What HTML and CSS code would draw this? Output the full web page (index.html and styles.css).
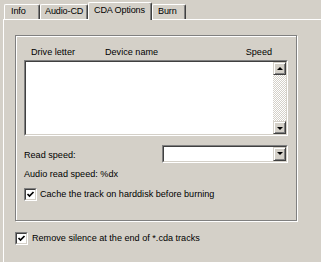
FILE: index.html
```html
<!DOCTYPE html>
<html lang="en">
    <head>
        <title>CDA Options</title>
        <link rel="stylesheet" href="styles.css">
    </head>
    <body>
        <div class="tabs">
            <div class="tab tab-info">Info</div>
            <div class="tab tab-audio">Audio-CD</div>
            <div class="tab tab-cda selected">CDA Options</div>
            <div class="tab tab-burn">Burn</div>
        </div>
        <div class="panel">
            <div class="group">
                <div class="drive-head">
                    <span>Drive letter</span>
                    <span>Device name</span>
                    <span>Speed</span>
                </div>
                <div class="sunken drive-list">
                    <div class="sunken-in list-inner">
                        <div class="scrollbar">
                            <div class="sb-btn"><span class="arrow-up"></span></div>
                            <div class="sb-track"></div>
                            <div class="sb-btn"><span class="arrow-down"></span></div>
                        </div>
                    </div>
                </div>
                <div class="speed-row">
                    <span>Read speed:</span>
                    <div class="sunken combo">
                        <div class="sunken-in combo-inner">
                            <div class="sb-btn"><span class="arrow-down"></span></div>
                        </div>
                    </div>
                </div>
                <div class="audio-speed">Audio read speed: %dx</div>
                <div class="check-row cache-row">
                    <span class="sunken check">
                        <span class="sunken-in check-inner">
                            <svg width="9" height="9" viewBox="0 0 9 9"><polyline points="1.5,4 3.5,6 7.5,2" fill="none" stroke="#000" stroke-width="1.7"/></svg>
                        </span>
                    </span>
                    <span>Cache the track on harddisk before burning</span>
                </div>
            </div>
            <div class="check-row silence-row">
                <span class="sunken check">
                    <span class="sunken-in check-inner">
                        <svg width="9" height="9" viewBox="0 0 9 9"><polyline points="1.5,4 3.5,6 7.5,2" fill="none" stroke="#000" stroke-width="1.7"/></svg>
                    </span>
                </span>
                <span>Remove silence at the end of *.cda tracks</span>
            </div>
        </div>
    </body>
</html>
```

FILE: styles.css
```css
body {
margin: 0;
width: 321px;
height: 262px;
overflow: hidden;
background-color: #d4d0c8;
font-family: "Liberation Sans", Arial, sans-serif;
font-size: 9.1px;
color: #000;
}
.tabs {
display: flex;
align-items: flex-end;
height: 19px;
padding-left: 4px;
position: relative;
z-index: 1;
}
.tab {
box-sizing: border-box;
height: 15px;
line-height: 13px;
padding-left: 5px;
border: 1px solid #fff;
border-right-color: #404040;
border-bottom: 0;
border-radius: 2px 2px 0 0;
box-shadow: inset -1px 0 #808080;
background-color: #d4d0c8;
white-space: nowrap;
letter-spacing: -0.15px;
overflow: hidden;
}
.tab-info {
width: 36px;
padding-left: 6px;
}
.tab-audio {
width: 48px;
padding-left: 4px;
}
.tab-cda {
width: 64px;
}
.tab-burn {
width: 34px;
}
.tab.selected {
height: 18px;
margin-bottom: -1px;
line-height: 15px;
}
.panel {
box-sizing: border-box;
height: 243px;
margin-left: 3px;
border-top: 1px solid #fff;
border-left: 1px solid #fff;
padding-top: 15px;
padding-left: 11px;
}
.group {
box-sizing: border-box;
width: 282px;
height: 186px;
border: 1px solid #808080;
box-shadow: inset 1px 1px 0 #fff, 1px 1px 0 #fff;
padding: 10px 0 0 8px;
}
.drive-head {
display: grid;
grid-template-columns: 74px 1fr auto;
width: 264px;
box-sizing: border-box;
padding: 0 16px 0 7px;
line-height: 12px;
}
.sunken {
display: block;
box-sizing: border-box;
border: 1px solid;
border-color: #808080 #fff #fff #808080;
}
.sunken-in {
display: block;
box-sizing: border-box;
height: 100%;
border: 1px solid;
border-color: #404040 #d4d0c8 #d4d0c8 #404040;
background-color: #fff;
}
.drive-list {
margin-top: 2px;
width: 264px;
height: 76px;
}
.list-inner {
display: flex;
justify-content: flex-end;
}
.scrollbar {
display: flex;
flex-direction: column;
width: 13px;
}
.sb-btn {
box-sizing: border-box;
display: flex;
align-items: center;
justify-content: center;
width: 13px;
height: 13px;
background-color: #d4d0c8;
border: 1px solid;
border-color: #d4d0c8 #404040 #404040 #d4d0c8;
box-shadow: inset 1px 1px 0 #fff, inset -1px -1px 0 #808080;
}
.sb-track {
flex: 1;
background: repeating-conic-gradient(#d4d0c8 0 25%, #fff 0 50%) 0 0 / 2px 2px;
}
.arrow-up {
width: 0;
height: 0;
border-left: 3px solid transparent;
border-right: 3px solid transparent;
border-bottom: 3px solid #000;
}
.arrow-down {
width: 0;
height: 0;
margin-top: 1px;
border-left: 3px solid transparent;
border-right: 3px solid transparent;
border-top: 3px solid #000;
}
.speed-row {
display: flex;
justify-content: space-between;
align-items: center;
width: 264px;
margin-top: 9px;
}
.speed-row span {
padding-top: 2px;
}
.combo {
width: 126px;
height: 18px;
}
.combo-inner {
display: flex;
justify-content: flex-end;
}
.combo-inner .sb-btn {
height: 14px;
}
.audio-speed {
margin-top: 5px;
line-height: 12px;
}
.check-row {
display: flex;
align-items: center;
gap: 3px;
line-height: 13px;
}
.check {
width: 13px;
height: 13px;
}
.check-inner svg {
display: block;
}
.cache-row {
margin-top: 8px;
}
.silence-row {
margin-top: 11px;
gap: 4px;
}
```
